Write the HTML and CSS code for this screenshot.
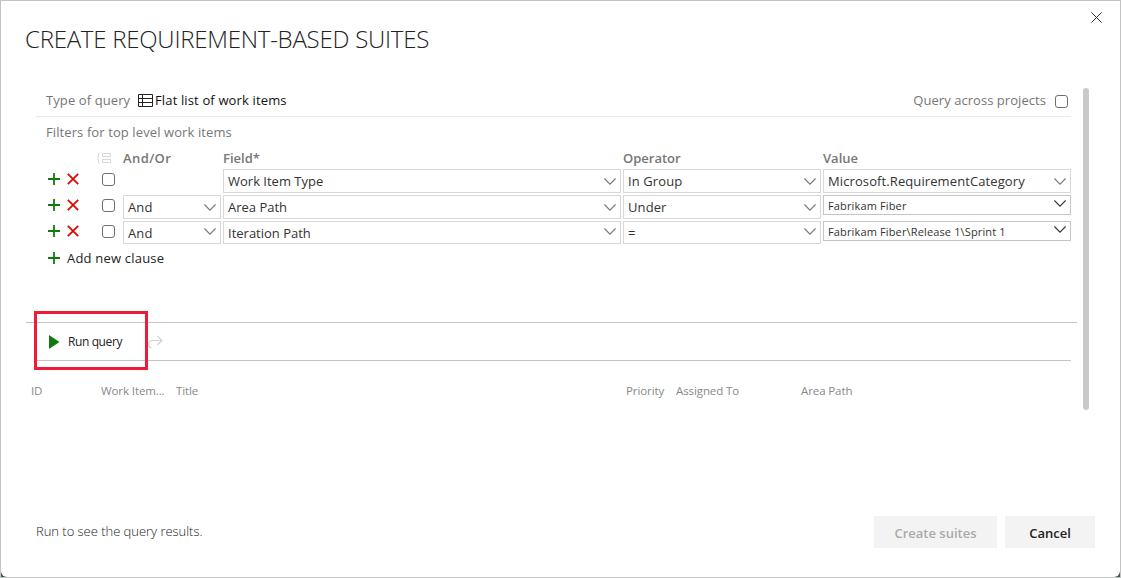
FILE: index.html
```html
<!DOCTYPE html>
<html lang="en">
<head>
<meta charset="utf-8">
<title>Create requirement-based suites</title>
<link rel="stylesheet" href="styles.css">
</head>
<body>
<svg class="defs" width="0" height="0">
  <symbol id="plus" viewBox="0 0 12 12"><path d="M6 0v12M0 6h12" stroke="#107c10" stroke-width="1.8" fill="none"/></symbol>
  <symbol id="cross" viewBox="0 0 12 12"><path d="M.8.8l10.4 10.4M11.2.8L.8 11.2" stroke="#da0a00" stroke-width="1.8" fill="none"/></symbol>
  <symbol id="chevron" viewBox="0 0 12 7"><path d="M.4.5L6 6.1 11.600.5" stroke="currentColor" stroke-width="1.1" fill="none"/></symbol>
</svg>
<div class="backdrop">
<main class="dialog">
  <header class="head">
    <h1 class="title">CREATE REQUIREMENT-BASED SUITES</h1>
    <button class="close" aria-label="Close"><svg width="11" height="11" viewBox="0 0 11 11"><path d="M.4.4l10.200 10.200M10.600.4L.4 10.600" stroke="#333" fill="none"/></svg></button>
  </header>
  <div class="body">
    <div class="content">
      <div class="type-bar">
        <span class="type-label">Type of query</span>
        <svg class="list-icon" width="15" height="13" viewBox="0 0 15 13"><path d="M.5.5h14v12H.5zM4.500.5v12M.5 4.500h14M.5 8.500h14" stroke="#222" fill="none"/></svg>
        <span class="type-value">Flat list of work items</span>
        <span class="across">Query across projects</span>
        <i class="check"></i>
      </div>
      <div class="filters-label"><span>Filters for top level work items</span></div>
      <div class="clause heads">
        <svg class="group-icon" width="14" height="11" viewBox="0 0 14 11"><path d="M3 .5H2.500Q1.500.5 1.500 2v2L.5 5.500l1 1.500v2q0 1.500 1 1.500H3M5.500.5h8v3h-8zM5.500 6.500h8v3h-8z" stroke="#d8d8d8" fill="none"/></svg>
        <b class="h-and">And/Or</b><b class="h-field">Field*</b><b class="h-op">Operator</b><b class="h-val">Value</b>
      </div>
      <div class="clause">
        <svg class="plus"><use href="#plus"/></svg><svg class="cross"><use href="#cross"/></svg><i class="check"></i>
        <div class="combo field"><span>Work Item Type</span><svg><use href="#chevron"/></svg></div>
        <div class="combo op"><span>In Group</span><svg><use href="#chevron"/></svg></div>
        <div class="combo val"><span>Microsoft.RequirementCategory</span><svg><use href="#chevron"/></svg></div>
      </div>
      <div class="clause">
        <svg class="plus"><use href="#plus"/></svg><svg class="cross"><use href="#cross"/></svg><i class="check"></i>
        <div class="combo and"><span>And</span><svg><use href="#chevron"/></svg></div>
        <div class="combo field"><span>Area Path</span><svg><use href="#chevron"/></svg></div>
        <div class="combo op"><span>Under</span><svg><use href="#chevron"/></svg></div>
        <div class="combo val tree"><span>Fabrikam Fiber</span><svg><use href="#chevron"/></svg></div>
      </div>
      <div class="clause last">
        <svg class="plus"><use href="#plus"/></svg><svg class="cross"><use href="#cross"/></svg><i class="check"></i>
        <div class="combo and"><span>And</span><svg><use href="#chevron"/></svg></div>
        <div class="combo field"><span>Iteration Path</span><svg><use href="#chevron"/></svg></div>
        <div class="combo op"><span>=</span><svg><use href="#chevron"/></svg></div>
        <div class="combo val tree"><span>Fabrikam Fiber\Release 1\Sprint 1</span><svg><use href="#chevron"/></svg></div>
      </div>
      <div class="add"><svg class="plus"><use href="#plus"/></svg><span>Add new clause</span></div>
      <div class="toolbar">
        <div class="tools">
          <svg width="11" height="14" viewBox="0 0 11 14"><path d="M0 0l10.500 7L0 14z" fill="#107c10"/></svg>
          <span class="run">Run query</span>
          <svg class="redo" width="15" height="14" viewBox="0 0 15 14"><path d="M3.500 13Q.7 12 .7 9.500 .7 5.500 5 5.500h9M9.500 1L14 5.500 9.500 10" stroke="#d2d2d2" stroke-width="1.200" fill="none"/></svg>
        </div>
        <div class="highlight"></div>
      </div>
      <div class="results">
        <span>ID</span><span>Work Item...</span><span>Title</span><span>Priority</span><span>Assigned To</span><span>Area Path</span>
      </div>
    </div>
    <div class="scrollbar"></div>
  </div>
  <footer class="foot">
    <span class="status">Run to see the query results.</span>
    <button class="btn create" disabled>Create suites</button>
    <button class="btn cancel">Cancel</button>
  </footer>
</main>
</div>
</body>
</html>
```
FILE: styles.css
```css
* { box-sizing: border-box; }
body { margin: 0; font-family: "Open Sans", "Noto Sans", sans-serif; font-size: 13px; letter-spacing: .1px; color: #222; }
.defs { display: block; position: absolute; }
.backdrop { width: 1121px; height: 578px; background: #3d5a50; border: 1px solid #c3c3c3; overflow: hidden; }
.dialog { height: 576px; background: #fff; border-radius: 0 0 6px 6px; display: flex; flex-direction: column; }
.head { height: 87px; display: flex; justify-content: space-between; padding: 0 18px 0 24px; }
.title { margin: 20px 0 0; font-size: 24px; font-weight: 300; line-height: 36px; letter-spacing: -.24px; white-space: nowrap; }
button { font-family: inherit; border: 0; padding: 0; }
.close { background: none; width: 11px; height: 11px; margin-top: 11px; display: block; }
.close svg { display: block; }
.body { height: 322px; display: flex; }
.content { width: 1051px; margin-left: 25px; }
.scrollbar { width: 6px; height: 322px; margin-left: 6px; border-radius: 3px; background: #cacaca; }
.type-bar { height: 29px; margin: 0 6px 0 10px; padding: 0 3px 4px 10px; border-bottom: 1px solid #e8e8e8; display: flex; align-items: center; white-space: nowrap; color: #767676; }
.type-label { width: 92px; }
.list-icon { margin-right: 2px; }
.type-value { color: #111; letter-spacing: .14px; }
.across { margin-left: auto; margin-right: 9px; letter-spacing: .05px; }
.check { width: 13px; height: 13px; border: 1px solid #6f6f6f; border-radius: 3px; flex: none; }
.type-bar .check { margin-top: 3px; }
.filters-label { height: 31px; line-height: 31px; padding-left: 20px; color: #767676; }
.clause { display: grid; grid-template-columns: 19px 35px 21px 100px 400px 200px 248px; height: 26px; padding-left: 22px; align-items: start; }
.clause > .plus, .clause > .cross, .clause > .check { margin-top: 4px; }
.heads { height: 21px; line-height: 20px; color: #767676; }
.heads b { font-weight: 600; letter-spacing: 0; }
.heads .h-and { grid-column: 4; letter-spacing: .4px; }
.group-icon { grid-column: 2 / 4; margin: 5px 0 0 30px; }
.plus, .cross { width: 12px; height: 12px; display: block; }
.combo { height: 24px; border: 1px solid #d8d8d8; display: flex; justify-content: space-between; align-items: center; padding: 0 4px; color: #333; white-space: nowrap; }
.combo svg { width: 12px; height: 7px; color: #777; flex: none; }
.and { grid-column: 4; width: 98px; }
.field { grid-column: 5; width: 398px; letter-spacing: 0; }
.op { grid-column: 6; width: 198px; }
.val { grid-column: 7; }
.last .combo { height: 23px; }
.clause .tree { height: 20px; border-color: #c4c4c4; font-size: 11px; letter-spacing: .14px; }
.tree svg { color: #333; margin-bottom: 3px; }
.last .combo:not(.tree) svg { margin-bottom: 2px; }
.add { height: 21px; padding-left: 22px; display: flex; align-items: center; gap: 7px; color: #222; letter-spacing: .2px; }
.toolbar { position: relative; margin-top: 54px; border-top: 1px solid #c4c4c4; height: 39px; }
.tools { margin: 0 6px 0 10px; height: 38px; border-bottom: 1px solid #c4c4c4; display: flex; align-items: center; padding-left: 13px; font-size: 12px; }
.run { width: 80px; margin-left: 8px; letter-spacing: -.4px; white-space: nowrap; }
.highlight { position: absolute; left: 8px; top: -12px; width: 114px; height: 59px; border: 3px solid #ee1c38; }
.results { display: grid; grid-template-columns: 70px 75px 450px 50px 125px 1fr; padding-left: 5px; height: 60px; line-height: 60px; font-size: 11.500px; letter-spacing: -.1px; color: #888; white-space: nowrap; }
.foot { margin-top: 106px; height: 32px; padding: 0 25px 0 35px; display: flex; }
.status { line-height: 31px; margin-right: auto; font-weight: 300; letter-spacing: -.03px; color: #222; }
.btn { height: 32px; padding-top: 2px; background: #f3f3f3; font-size: 13px; font-weight: 600; }
.create { width: 123px; color: #aaa; margin-right: 8px; }
.cancel { width: 90px; color: #222; }
```
